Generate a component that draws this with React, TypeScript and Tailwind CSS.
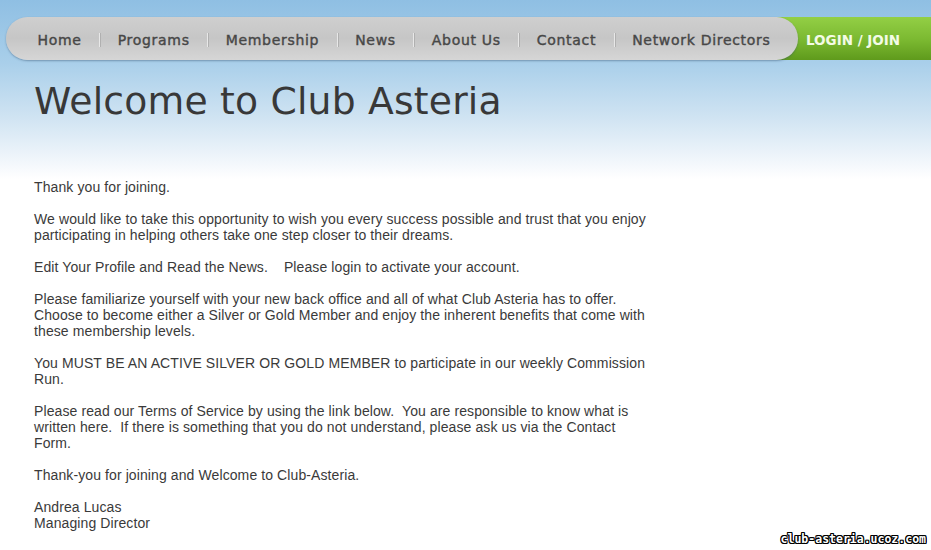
const NAV_ITEMS = ["Home", "Programs", "Membership", "News", "About Us", "Contact", "Network Directors"];

const PARAGRAPHS: string[][] = [
  ["Thank you for joining."],
  [
    "We would like to take this opportunity to wish you every success possible and trust that you enjoy",
    "participating in helping others take one step closer to their dreams.",
  ],
  ["Edit Your Profile and Read the News.\u00a0\u00a0\u00a0 Please login to activate your account."],
  [
    "Please familiarize yourself with your new back office and all of what Club Asteria has to offer.",
    "Choose to become either a Silver or Gold Member and enjoy the inherent benefits that come with",
    "these membership levels.",
  ],
  ["You MUST BE AN ACTIVE SILVER OR GOLD MEMBER to participate in our weekly Commission", "Run."],
  [
    "Please read our Terms of Service by using the link below.\u00a0 You are responsible to know what is",
    "written here.\u00a0 If there is something that you do not understand, please ask us via the Contact",
    "Form.",
  ],
  ["Thank-you for joining and Welcome to Club-Asteria."],
  ["Andrea Lucas", "Managing Director"],
];

export default function App() {
  return (
    <div className="relative h-[550px] w-[931px] overflow-hidden bg-white">
      <div className="bg-[linear-gradient(180deg,#8fbfe3_0%,#a9cfea_35%,#cfe3f2_65%,#f4f8fc_92%,#ffffff_100%)] pt-[17px] pb-[4px]">
        <nav className="flex items-stretch">
          <div className="relative z-10 ml-[6px] flex h-[43px] shrink-0 items-center rounded-full bg-[linear-gradient(180deg,#cfcfcf_0%,#c6c6c6_50%,#d6d6d6_100%)] pt-[3px] pr-[10px] pl-[14px] shadow-[0_1px_2px_rgba(60,90,120,0.5)]">
            {NAV_ITEMS.map((item, i) => (
              <div key={item} className="flex items-center">
                {i > 0 && <span className="h-[14px] w-px bg-[#e8e8e8] shadow-[1px_0_0_#b0b0b0]" />}
                <span className="px-[17.5px] whitespace-nowrap font-['DejaVu_Sans',sans-serif] text-[14px] tracking-[0.7px] text-[#474747] [-webkit-text-stroke:0.4px_#474747]">
                  {item}
                </span>
              </div>
            ))}
          </div>
          <div className="-ml-[24px] flex h-[43px] flex-1 items-center bg-[linear-gradient(180deg,#93cf45_0%,#7ab830_55%,#5f9a1c_100%)] pt-[3px] pl-[32px]">
            <span className="whitespace-nowrap font-['DejaVu_Sans',sans-serif] text-[13.5px] font-bold text-[#f3fbe6]">LOGIN / JOIN</span>
          </div>
        </nav>
        <h1 className="mt-[17px] pl-[34px] font-['DejaVu_Sans',sans-serif] text-[37.7px] leading-[48px] tracking-[0.2px] text-[#383838]">
          Welcome to Club Asteria
        </h1>
        <div className="h-[50px]" />
      </div>

      <div className="flex flex-col gap-[16px] pl-[34px] font-['Liberation_Sans',Arial,sans-serif] text-[14px] leading-[16px] tracking-[0.1px] text-[#3a3a3a]">
        {PARAGRAPHS.map((lines, i) => (
          <p key={i}>
            {lines.map((l, j) => (
              <span key={j} className="block whitespace-pre">
                {l}
              </span>
            ))}
          </p>
        ))}
      </div>

      <div className="absolute right-[5px] bottom-[2px] font-['DejaVu_Sans_Mono',monospace] text-[11.5px] font-bold text-white [text-shadow:1px_0_0_#000,-1px_0_0_#000,0_1px_0_#000,0_-1px_0_#000,1px_1px_0_#000,-1px_-1px_0_#000,1px_-1px_0_#000,-1px_1px_0_#000]">
        club-asteria.ucoz.com
      </div>
    </div>
  );
}
